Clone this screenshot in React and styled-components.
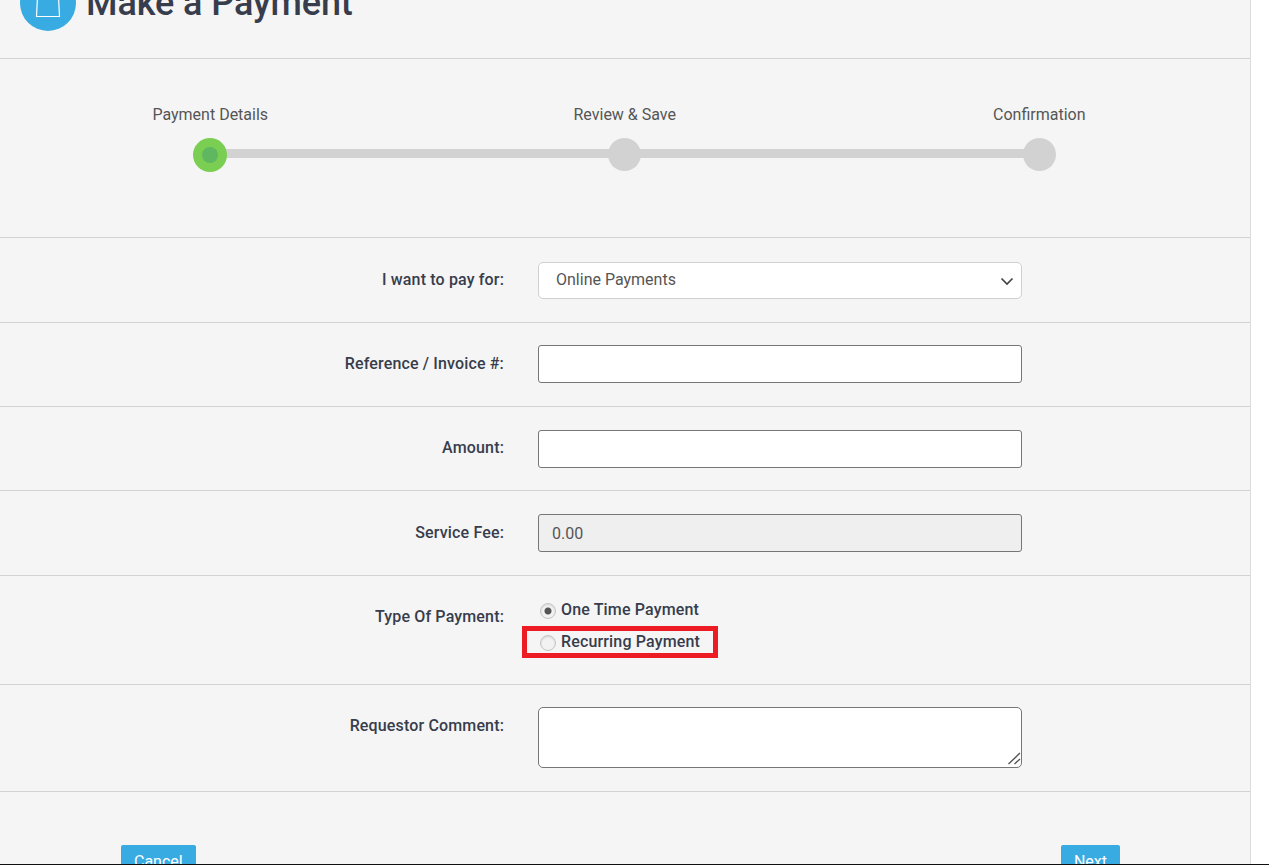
import styled, { createGlobalStyle } from "styled-components";

const GlobalStyle = createGlobalStyle`
  html, body {
    margin: 0;
    background: #fff;
    font-family: Roboto, "Liberation Sans", sans-serif;
  }
  * {
    box-sizing: border-box;
  }
`;

const Page = styled.div`
  height: 865px;
  overflow: hidden;
  border-bottom: 1px solid #111;
`;

const Panel = styled.div`
  width: 1251px;
  min-height: 1000px;
  margin-top: -25px;
  background: #f5f5f5;
  border-right: 1px solid #dcdcdc;
`;

const Header = styled.div`
  height: 84px;
  padding-left: 20px;
  display: flex;
  align-items: flex-start;
  gap: 10px;
  border-bottom: 1px solid #d3d3d3;
`;

const IconCircle = styled.div`
  width: 56px;
  height: 56px;
  border-radius: 50%;
  background: #38abe3;
  flex: none;
`;

const Title = styled.h1`
  margin: 0;
  font-size: 36px;
  line-height: 57px;
  font-weight: 500;
  letter-spacing: -0.1px;
  color: #373d4c;
`;

const Stepper = styled.div`
  position: relative;
  height: 178px;
  padding: 46px 3px 0;
  display: grid;
  grid-template-columns: repeat(3, 414.5px);
`;

const Track = styled.div`
  position: absolute;
  top: 90px;
  left: 210px;
  width: 829px;
  height: 9px;
  background: #d2d2d2;
`;

const Step = styled.div`
  position: relative;
  display: flex;
  flex-direction: column;
  align-items: center;
  gap: 13px;
`;

const StepLabel = styled.div`
  font-size: 16px;
  line-height: 20px;
  color: #555;
`;

const Dot = styled.div`
  width: ${(p) => (p.$active ? 34 : 33)}px;
  height: ${(p) => (p.$active ? 34 : 33)}px;
  border-radius: 50%;
  display: flex;
  align-items: center;
  justify-content: center;
  background: ${(p) => (p.$active ? "#7ace52" : "#d2d2d2")};
  &::after {
    content: "";
    display: ${(p) => (p.$active ? "block" : "none")};
    width: 16px;
    height: 16px;
    border-radius: 50%;
    background: #5fb760;
  }
`;

const Row = styled.div`
  display: grid;
  grid-template-columns: 504px 484px;
  column-gap: 34px;
  align-items: start;
  height: ${(p) => p.$height}px;
  padding-top: ${(p) => p.$top || 23}px;
  border-top: 1px solid #d3d3d3;
`;

const Label = styled.label`
  text-align: right;
  font-size: 16px;
  font-weight: 500;
  line-height: 20px;
  padding-top: ${(p) => p.$offset || 9}px;
  letter-spacing: 0.15px;
  color: #373d4c;
`;

const TextInput = styled.input`
  display: block;
  width: 484px;
  height: 38px;
  padding: 0 13px;
  background: ${(p) => (p.disabled ? "#efefef" : "#fff")};
  border: 1px solid #767676;
  border-radius: 3px;
  font: 400 16px Roboto, sans-serif;
  color: #555;
  opacity: 1;
  -webkit-text-fill-color: #555;
`;

const SelectBox = styled.div`
  position: relative;
  width: 484px;
  height: 37px;
  display: flex;
  align-items: center;
  padding: 0 17px 2px;
  background: #fff;
  border: 1px solid #d0d0d0;
  border-radius: 5px;
  font-size: 16px;
  color: #555;
`;

const Chevron = styled.svg`
  position: absolute;
  top: 14px;
  right: 7px;
`;

const CommentWrap = styled.div`
  position: relative;
  width: 484px;
  height: 61px;
`;

const Comment = styled.textarea`
  display: block;
  width: 100%;
  height: 100%;
  padding: 6px 17px;
  background: #fff;
  border: 1px solid #767676;
  border-radius: 5px;
  resize: none;
`;

const ResizeGrip = styled.svg`
  position: absolute;
  right: 1px;
  bottom: 3px;
`;

const RadioGroup = styled.div`
  display: flex;
  flex-direction: column;
  gap: 12px;
`;

const RadioRow = styled.label`
  display: flex;
  align-items: center;
  gap: 5px;
  height: 20px;
  padding-left: 2px;
  font-size: 16px;
  font-weight: 500;
  letter-spacing: 0.15px;
  color: #373d4c;
`;

const Highlight = styled.div`
  position: absolute;
  left: -16px;
  top: -5px;
  width: 196px;
  height: 32px;
  border: 5px solid #ed1c24;
`;

const RadioSlot = styled.div`
  position: relative;
`;

const RadioMark = styled.span`
  width: 16px;
  height: 16px;
  margin-top: 4px;
  border-radius: 50%;
  border: 1px solid #c4c4c4;
  background: ${(p) => (p.$checked ? "radial-gradient(circle, #555 0 3px, #f2f2f2 4px)" : "#f2f2f2")};
  box-shadow: inset 0 1px 2px rgba(0, 0, 0, 0.12);
`;

const Footer = styled.div`
  display: flex;
  justify-content: space-between;
  padding: 53px 130px 0 121px;
  border-top: 1px solid #d3d3d3;
`;

const Button = styled.button`
  height: 36px;
  padding: 0 13px 3px;
  border: 0;
  border-radius: 2px;
  background: #38abe3;
  color: #fff;
  font: 400 16px Roboto, sans-serif;
`;

export default function App() {
  return (
    <Page>
      <GlobalStyle />
      <Panel>
        <Header>
          <IconCircle>
            <svg width="56" height="56" viewBox="0 0 56 56">
              <path d="M17.6 20 L16.5 41.5 H39.5 L38.4 20 Z" fill="none" stroke="#fff" strokeWidth="1.2" />
            </svg>
          </IconCircle>
          <Title>Make a Payment</Title>
        </Header>
        <Stepper>
          <Track />
          <Step>
            <StepLabel>Payment Details</StepLabel>
            <Dot $active />
          </Step>
          <Step>
            <StepLabel>Review &amp; Save</StepLabel>
            <Dot />
          </Step>
          <Step>
            <StepLabel>Confirmation</StepLabel>
            <Dot />
          </Step>
        </Stepper>
        <Row $height={85} $top={24}>
          <Label $offset={8}>I want to pay for:</Label>
          <SelectBox>
            Online Payments
            <Chevron width="14" height="9" viewBox="0 0 14 9">
              <path d="M1.5 1.5 L7 7 L12.5 1.5" fill="none" stroke="#444" strokeWidth="1.7" />
            </Chevron>
          </SelectBox>
        </Row>
        <Row $height={84} $top={22}>
          <Label>Reference / Invoice #:</Label>
          <TextInput />
        </Row>
        <Row $height={84}>
          <Label $offset={8}>Amount:</Label>
          <TextInput />
        </Row>
        <Row $height={85}>
          <Label>Service Fee:</Label>
          <TextInput disabled value="0.00" readOnly />
        </Row>
        <Row $height={109} $top={23}>
          <Label $offset={8}>Type Of Payment:</Label>
          <RadioGroup>
            <RadioRow>
              <RadioMark $checked />
              One Time Payment
            </RadioRow>
            <RadioSlot>
              <Highlight />
              <RadioRow>
                <RadioMark />
                Recurring Payment
              </RadioRow>
            </RadioSlot>
          </RadioGroup>
        </Row>
        <Row $height={107} $top={22}>
          <Label>Requestor Comment:</Label>
          <CommentWrap>
            <Comment />
            <ResizeGrip width="14" height="13" viewBox="0 0 14 13">
              <path d="M13 1 L1.5 12 M13 7 L7.5 12" fill="none" stroke="#555" strokeWidth="1.4" />
            </ResizeGrip>
          </CommentWrap>
        </Row>
        <Footer>
          <Button>Cancel</Button>
          <Button>Next</Button>
        </Footer>
      </Panel>
    </Page>
  );
}
